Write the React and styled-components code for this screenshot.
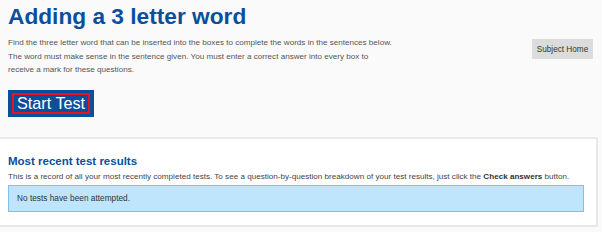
import React from "react";
import styled, { createGlobalStyle } from "styled-components";

const Global = createGlobalStyle`
  html, body {
    margin: 0;
    padding: 0;
    background: #fafafa;
    font-family: "Liberation Sans", Arial, sans-serif;
  }
`;

const Page = styled.div`
  width: 602px;
  height: 232px;
  overflow: hidden;
`;

const Intro = styled.div`
  padding: 0 8px;
`;

const Title = styled.h1`
  margin: 0;
  padding-top: 1px;
  font-size: 22.7px;
  line-height: 30px;
  font-weight: bold;
  color: #0b4f9c;
`;

const IntroRow = styled.div`
  display: flex;
  justify-content: space-between;
  align-items: flex-start;
  margin-top: 5px;
`;

const Lead = styled.p`
  margin: 0;
  font-size: 8.1px;
  line-height: 13.5px;
  color: #555;
  width: 388px;
`;

const GreyButton = styled.button`
  margin-top: 3px;
  margin-right: 1px;
  width: 61px;
  height: 20px;
  padding: 0;
  border: none;
  background: #dcdcdc;
  color: #333;
  font-family: "Liberation Sans", Arial, sans-serif;
  font-size: 8.2px;
`;

const StartButton = styled.button`
  margin-top: 13px;
  padding: 3px 4px;
  background: #0b4f9c;
  border: none;
  display: block;
`;

const StartInner = styled.span`
  display: block;
  border: 2px solid #e8141c;
  padding: 0 3px;
  color: #fff;
  font-family: "Liberation Sans", Arial, sans-serif;
  font-size: 16.2px;
  line-height: 17px;
`;

const Panel = styled.section`
  margin: 20px 4px 0 0;
  background: #fff;
  border: 2px solid #e8e8e8;
  border-left: none;
  padding: 14px 12px 13px 8px;
`;

const PanelTitle = styled.h2`
  margin: 0;
  font-size: 11.5px;
  line-height: 16px;
  font-weight: bold;
  color: #0b4f9c;
`;

const PanelText = styled.p`
  margin: 2px 0 2px;
  font-size: 8.1px;
  line-height: 12px;
  color: #444;
  white-space: nowrap;

  b {
    color: #333;
  }
`;

const Notice = styled.div`
  background: #bee5fc;
  border: 1px solid #78c3f2;
  height: 25px;
  display: flex;
  align-items: center;
  padding-left: 8px;
  font-size: 8.3px;
  color: #333;
`;

export default function App() {
  return (
    <Page>
      <Global />
      <Intro>
        <Title>Adding a 3 letter word</Title>
        <IntroRow>
          <Lead>
            Find the three letter word that can be inserted into the boxes to complete the words in the sentences below.
            The word must make sense in the sentence given. You must enter a correct answer into every box to
            receive a mark for these questions.
          </Lead>
          <GreyButton>Subject Home</GreyButton>
        </IntroRow>
        <StartButton>
          <StartInner>Start Test</StartInner>
        </StartButton>
      </Intro>
      <Panel>
        <PanelTitle>Most recent test results</PanelTitle>
        <PanelText>
          This is a record of all your most recently completed tests. To see a question-by-question breakdown of your test results, just click the <b>Check answers</b> button.
        </PanelText>
        <Notice>No tests have been attempted.</Notice>
      </Panel>
    </Page>
  );
}
